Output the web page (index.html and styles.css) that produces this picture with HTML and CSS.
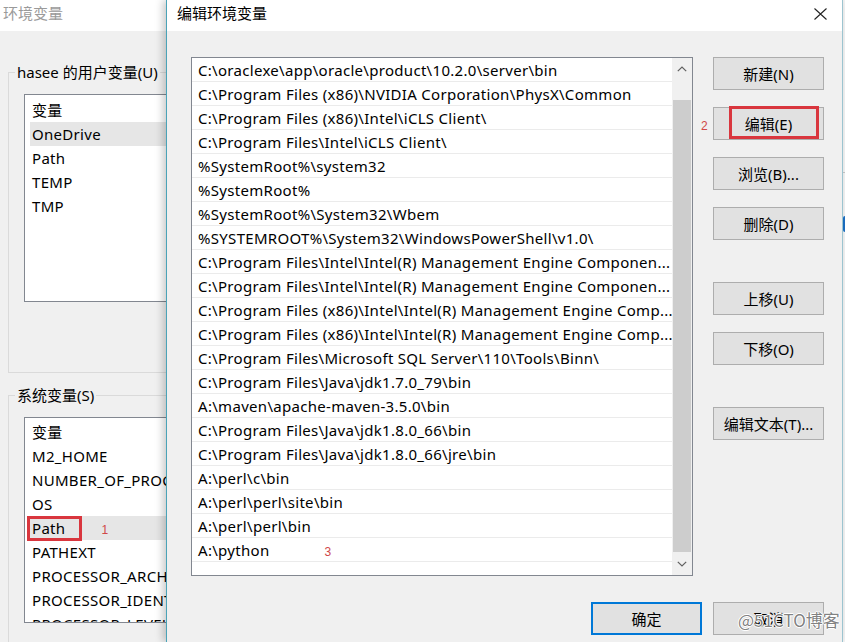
FILE: index.html
```html
<!DOCTYPE html>
<html>
<head>
<meta charset="utf-8">
<title>编辑环境变量</title>
<link rel="stylesheet" href="styles.css">
</head>
<body>
<div class="screen">
  <div class="backwin">
    <div class="back-title">环境变量</div>
    <fieldset class="group g1">
      <legend>hasee 的用户变量(U)</legend>
      <div class="ginner g1-inner">
        <div class="vlist l1">
          <div class="vrow">变量</div>
          <div class="vrow sel">OneDrive</div>
          <div class="vrow">Path</div>
          <div class="vrow">TEMP</div>
          <div class="vrow">TMP</div>
        </div>
      </div>
    </fieldset>
    <fieldset class="group g2">
      <legend>系统变量(S)</legend>
      <div class="ginner g2-inner">
        <div class="vlist l2">
          <div class="vrow">变量</div>
          <div class="vrow">M2_HOME</div>
          <div class="vrow">NUMBER_OF_PROCESSORS</div>
          <div class="vrow">OS</div>
          <div class="vrow sel"><span class="marked">Path</span><span class="anno anno1">1</span></div>
          <div class="vrow">PATHEXT</div>
          <div class="vrow">PROCESSOR_ARCHITECTURE</div>
          <div class="vrow">PROCESSOR_IDENTIFIER</div>
          <div class="vrow">PROCESSOR_LEVEL</div>
        </div>
      </div>
    </fieldset>
  </div>

  <div class="dialog">
    <div class="dtitle">
      <span class="dtitle-text">编辑环境变量</span>
      <svg class="close" width="13" height="12" viewBox="0 0 13 12"><path d="M0.5 0.5 L12.5 11.5 M12.5 0.5 L0.5 11.5" stroke="#222" stroke-width="1.1" fill="none"/></svg>
    </div>
    <div class="dbody">
      <div class="main">
        <div class="plist">
          <div class="rows">
            <div class="prow">C:\oraclexe\app\oracle\product\10.2.0\server\bin</div>
            <div class="prow">C:\Program Files (x86)\NVIDIA Corporation\PhysX\Common</div>
            <div class="prow">C:\Program Files (x86)\Intel\iCLS Client\</div>
            <div class="prow">C:\Program Files\Intel\iCLS Client\</div>
            <div class="prow">%SystemRoot%\system32</div>
            <div class="prow">%SystemRoot%</div>
            <div class="prow">%SystemRoot%\System32\Wbem</div>
            <div class="prow">%SYSTEMROOT%\System32\WindowsPowerShell\v1.0\</div>
            <div class="prow">C:\Program Files\Intel\Intel(R) Management Engine Componen...</div>
            <div class="prow">C:\Program Files\Intel\Intel(R) Management Engine Componen...</div>
            <div class="prow">C:\Program Files (x86)\Intel\Intel(R) Management Engine Comp...</div>
            <div class="prow">C:\Program Files (x86)\Intel\Intel(R) Management Engine Comp...</div>
            <div class="prow">C:\Program Files\Microsoft SQL Server\110\Tools\Binn\</div>
            <div class="prow">C:\Program Files\Java\jdk1.7.0_79\bin</div>
            <div class="prow">A:\maven\apache-maven-3.5.0\bin</div>
            <div class="prow">C:\Program Files\Java\jdk1.8.0_66\bin</div>
            <div class="prow">C:\Program Files\Java\jdk1.8.0_66\jre\bin</div>
            <div class="prow">A:\perl\c\bin</div>
            <div class="prow">A:\perl\perl\site\bin</div>
            <div class="prow">A:\perl\perl\bin</div>
            <div class="prow">A:\python<span class="anno anno3">3</span></div>
          </div>
          <div class="scroll">
            <div class="sbtn"><svg width="10" height="6" viewBox="0 0 10 6"><path d="M0.8 5.2 L5 1 L9.2 5.2" stroke="#606060" stroke-width="1.2" fill="none"/></svg></div>
            <div class="track-top"></div>
            <div class="thumb"></div>
            <div class="track-bottom"></div>
            <div class="sbtn"><svg width="10" height="6" viewBox="0 0 10 6"><path d="M0.8 0.8 L5 5 L9.2 0.8" stroke="#606060" stroke-width="1.2" fill="none"/></svg></div>
          </div>
        </div>
        <div class="btncol">
          <div class="btn">新建(N)</div>
          <div class="btn gap1 boxed"><span class="anno anno2">2</span>编辑(E)</div>
          <div class="btn gap1">浏览(B)...</div>
          <div class="btn gap1">删除(D)</div>
          <div class="btn gap2">上移(U)</div>
          <div class="btn gap1">下移(O)</div>
          <div class="btn gap2">编辑文本(T)...</div>
        </div>
      </div>
      <div class="footer">
        <div class="btn primary">确定</div>
        <div class="btn">取消</div>
      </div>
    </div>
  </div>

  <div class="edge">
    <div class="edge-line"></div>
    <div class="edge-blue"></div>
  </div>

  <div class="watermark">@51CTO博客</div>
</div>
</body>
</html>
```

FILE: styles.css
```css
* {
  box-sizing: border-box;
  margin: 0;
  padding: 0;
}

html, body {
  width: 845px;
  height: 642px;
  overflow: hidden;
}

body {
  font-family: "Noto Sans", "Noto Sans CJK SC", sans-serif;
  font-size: 15px;
  color: #000;
  background: #f0f0f0;
}

.screen {
  position: relative;
  display: flex;
  width: 845px;
  height: 642px;
  overflow: hidden;
}

/* ---------- back window ---------- */
.backwin {
  width: 166px;
  flex: none;
  overflow: hidden;
  background: #f0f0f0;
  display: flex;
  flex-direction: column;
}

.back-title {
  height: 31px;
  flex: none;
  background: #fff;
  color: #9a9a9a;
  padding: 3px 0 0 3px;
  line-height: 20px;
  white-space: nowrap;
}

.group {
  flex: none;
  width: 420px;
  margin-left: 8px;
  border: 1px solid #dadada;
  padding: 0;
  min-inline-size: 0;
}

.group legend {
  margin-left: 6px;
  padding: 0 2px;
  line-height: 20px;
  white-space: nowrap;
}

.g1 {
  margin-top: 31px;
}

.g2 {
  margin-top: 12px;
}

.g1-inner {
  padding: 12px 0 70px 15px;
}

.g2-inner {
  padding: 12px 0 40px 15px;
}

.vlist {
  width: 380px;
  background: #fff;
  border: 1px solid #828790;
  overflow: hidden;
}

.l1 {
  height: 208px;
  padding-top: 3px;
}

.l2 {
  height: 206px;
  padding-top: 2px;
}

.vrow {
  height: 24px;
  line-height: 24px;
  margin-left: 5px;
  padding-left: 2px;
  white-space: nowrap;
  letter-spacing: 0.3px;
}

.vrow.sel {
  background: #e6e6e6;
}

.marked {
  position: relative;
}

.marked::after {
  content: "";
  position: absolute;
  left: -5px;
  right: -17px;
  top: -2px;
  bottom: -3px;
  border: 3px solid #d9363e;
}

.anno {
  color: #d04848;
  font-size: 12px;
  font-family: "Liberation Sans", sans-serif;
  letter-spacing: 0;
}

.anno1 {
  margin-left: 36px;
}

.anno3 {
  margin-left: 55px;
}

/* ---------- dialog ---------- */
.dialog {
  position: relative;
  z-index: 1;
  width: 677px;
  flex: none;
  display: flex;
  flex-direction: column;
  background: #f0f0f0;
  border-left: 1px solid #4aa3b8;
  border-right: 1px solid #9cc4d0;
  box-shadow: -3px 0 8px rgba(0, 0, 0, 0.22);
}

.dtitle {
  height: 31px;
  flex: none;
  background: #fff;
  display: flex;
  justify-content: space-between;
  align-items: flex-start;
  padding: 3px 15px 0 10px;
  line-height: 20px;
}

.close {
  margin-top: 5px;
}

.dbody {
  padding: 26px 18px 0 24px;
}

.main {
  display: flex;
  gap: 20px;
}

.plist {
  width: 502px;
  height: 519px;
  flex: none;
  display: flex;
  background: #fff;
  border: 1px solid #828790;
}

.rows {
  flex: 1;
  min-width: 0;
  overflow: hidden;
}

.prow {
  height: 24px;
  line-height: 24px;
  padding-left: 6px;
  border-bottom: 1px solid #ebebeb;
  white-space: nowrap;
  overflow: hidden;
  letter-spacing: 0.3px;
}

.scroll {
  width: 20px;
  flex: none;
  display: flex;
  flex-direction: column;
  background: #f0f0f0;
}

.sbtn {
  height: 22px;
  display: flex;
  align-items: center;
  justify-content: center;
}

.track-top {
  height: 20px;
}

.thumb {
  height: 452px;
  margin: 0 1px;
  background: #cdcdcd;
}

.track-bottom {
  height: 1px;
}

.btncol {
  width: 111px;
  flex: none;
  display: flex;
  flex-direction: column;
}

.btn {
  position: relative;
  width: 111px;
  height: 33px;
  flex: none;
  display: flex;
  align-items: center;
  justify-content: center;
  background: #e1e1e1;
  border: 1px solid #adadad;
  white-space: nowrap;
}

.gap1 {
  margin-top: 17px;
}

.gap2 {
  margin-top: 42px;
}

.boxed::after {
  content: "";
  position: absolute;
  left: 15px;
  right: 4px;
  top: -2px;
  bottom: 0;
  border: 3px solid #d9363e;
}

.anno2 {
  position: absolute;
  left: -13px;
  top: 11px;
}

.primary {
  border: 2px solid #0078d7;
}

.footer {
  margin-top: 26px;
  display: flex;
  justify-content: flex-end;
  gap: 11px;
}

/* ---------- right edge ---------- */
.edge {
  width: 2px;
  flex: none;
  background: #f4f4f4;
  display: flex;
  flex-direction: column;
}

.edge-line {
  height: 173px;
  border-bottom: 1px solid #c8c8c8;
}

.edge-blue {
  margin-top: 43px;
  height: 16px;
  background: #1b6fc4;
  border-radius: 2px 0 0 2px;
}

.watermark {
  position: absolute;
  left: 738px;
  top: 609px;
  z-index: 2;
  font-family: "Noto Sans CJK SC", sans-serif;
  font-size: 17px;
  line-height: 22px;
  color: rgba(95, 95, 95, 0.8);
  text-shadow: 1px 0 0 #fff, -1px 0 0 #fff, 0 1px 0 #fff, 0 -1px 0 #fff;
  white-space: nowrap;
}
```
